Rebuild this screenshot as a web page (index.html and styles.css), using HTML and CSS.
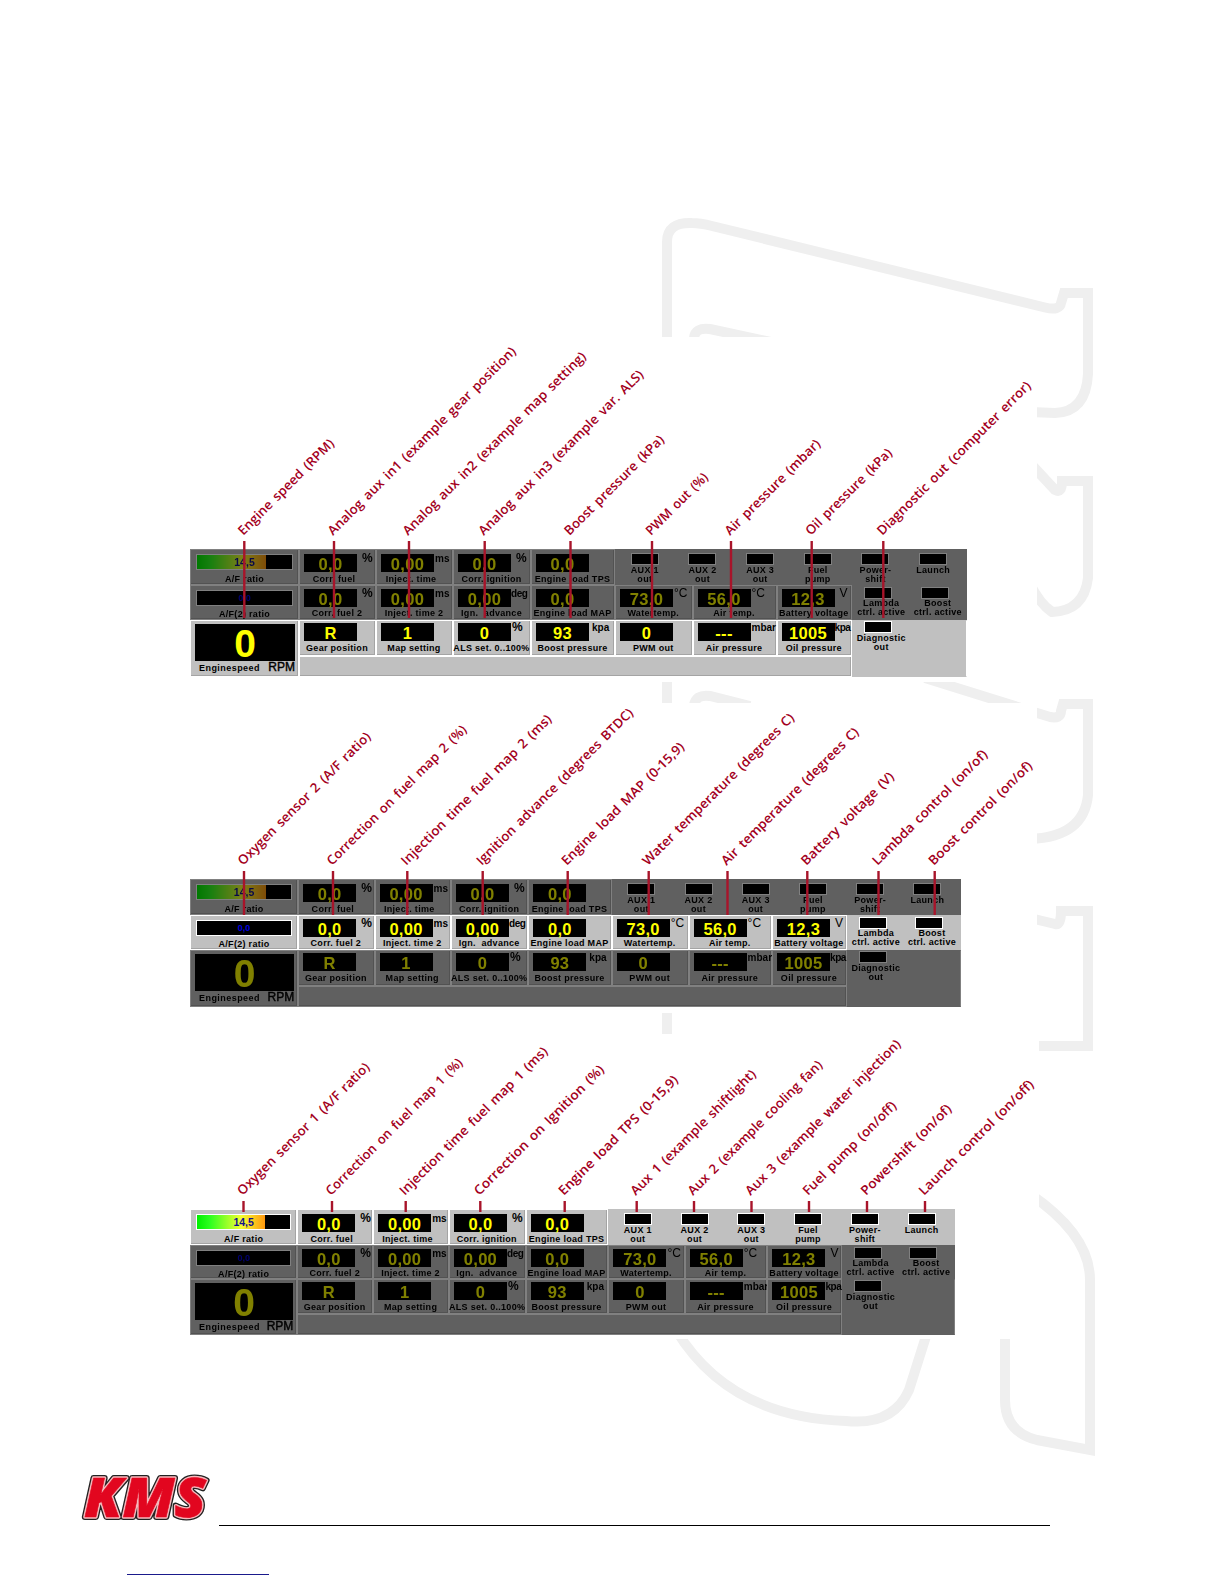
FILE: index.html
```
<!DOCTYPE html>
<html lang="en">
<head>
    <meta charset="UTF-8">
    <meta name="viewport" content="width=device-width, initial-scale=1.0">
    <title>KMS display overview</title>
    <link rel="stylesheet" href="styles.css">
</head>
<body>
    <svg class="watermark" viewBox="0 0 1224 1584">
        <path d="M667 345V242Q667 222 692 223Q700 223 712 226L1045 307.500Q1060 311 1061 303L1064 293H1088V374Q1086 412 1055 413L1030 412"/>
        <path d="M694 345V338Q695 327 710 329L775 343"/>
        <path d="M1030 463L1055 490Q1062 494 1062 481H1088V578Q1084 611 1052 612Q1040 604 1030 584"/>
        <path d="M667 675V710M694 712V706Q695 694 710 696L750 706M925 678L1050 717Q1061 719 1061 711L1063 704H1088V795Q1084 837 1030 839"/>
        <path d="M667 1005V1040M1030 918L1055 924Q1061 926 1061 911H1088V1046H1030"/>
        <path d="M1030 1194Q1090 1235 1090 1280V1450L1037 1440Q1005 1432 1005 1400V1330"/>
        <path d="M676 1330C705 1378 755 1418 846 1421Q893 1426 909 1390L928 1330"/>
    </svg>

    <main>
        <section class="figure figure-1"><div class="panel" id="panel-1"></div></section>
        <section class="figure figure-2"><div class="panel" id="panel-2"></div></section>
        <section class="figure figure-3"><div class="panel" id="panel-3"></div></section>
    </main>

    <footer>
        <svg class="logo" viewBox="0 -16 134 82">
            <g class="logo-text">
                <text class="logo-edge" x="5" y="46" textLength="122" lengthAdjust="spacingAndGlyphs">KMS</text>
                <text class="logo-rim" x="5" y="46" textLength="122" lengthAdjust="spacingAndGlyphs">KMS</text>
                <text class="logo-fill" x="5" y="46" textLength="122" lengthAdjust="spacingAndGlyphs">KMS</text>
            </g>
        </svg>
        <div class="rule"></div>
        <div class="link-line"></div>
    </footer>

    <script src="script.js"></script>
</body>
</html>
```
FILE: styles.css
```
* {
    box-sizing: border-box;
}

body {
    margin: 0;
    height: 1584px;
    overflow: hidden;
    background-color: #fff;
    font-family: "Liberation Sans", Arial, sans-serif;
}

.watermark {
    position: absolute;
    left: 0;
    top: 0;
    width: 1224px;
    height: 1584px;
    fill: none;
    stroke: #efefef;
    stroke-width: 10;
}

main {
    position: relative;
    display: flex;
    flex-direction: column;
    gap: 21px;
    padding: 337px 0 0 188px;
}

.figure {
    position: relative;
    width: 849px;
    padding-left: 2px;
    background-color: #fff;
}

.figure-1 {
    height: 345px;
    padding-top: 212px;
}

.figure-2 {
    height: 310px;
    padding-top: 176px;
}

.figure-3 {
    width: 851px;
    height: 305px;
    padding-top: 175px;
}

/* instrument panel */
.panel {
    display: grid;
    grid-template-columns: 109fr 77fr 77fr 78fr 84fr 77.5fr 84fr 75.5fr 115fr;
    grid-template-rows: 36fr 34.5fr 36fr 21fr;
    background-color: #606060;
    color: #000;
    font-size: 9px;
    font-weight: bold;
}

.figure-1 .panel {
    width: 777px;
    height: 128px;
}

.figure-2 .panel {
    width: 771px;
    height: 128px;
}

.figure-3 .panel {
    width: 765px;
    height: 126px;
}

.cell {
    position: relative;
    min-width: 0;
    min-height: 0;
    background-color: #c0c0c0;
    border: 1px solid #fff;
    box-shadow: inset -1px -1px 0 #a4a4a4;
}

.dim {
    filter: brightness(0.5);
}

.meter {
    display: flex;
    flex-direction: column;
    padding: 2px 0 0 4px;
}

.meter.row-1 {
    padding-top: 4px;
}

.meter.row-2 {
    padding-top: 3px;
}

.reading {
    display: flex;
    height: 18px;
}

.value {
    flex: none;
    width: 53px;
    background-color: #000;
    color: #ff0;
    font-size: 16.5px;
    line-height: 20px;
    letter-spacing: 0.3px;
    text-align: center;
}

.unit {
    font-size: 10px;
    line-height: 9px;
}

.near {
    margin-left: 1px;
}

.mid {
    margin-left: 3px;
}

.far {
    margin-left: 5px;
}

.tight {
    letter-spacing: -0.4px;
}

.percent {
    font-size: 12px;
}

.plain {
    font-size: 12px;
    font-weight: normal;
}

.label {
    margin: 2px 0 0 -5px;
    line-height: 10px;
    letter-spacing: 0.3px;
    text-align: center;
    white-space: nowrap;
}

.row-2 .label {
    margin-top: 1px;
}

.label.short {
    padding-right: 6px;
}

.ratio {
    padding: 4px 5px 0 5px;
}

.bar {
    position: relative;
    height: 16px;
    background-color: #000;
    border: 1px solid #fff;
}

.fill {
    height: 100%;
    background: linear-gradient(to right, #00f000, #30ff20 20%, #f4ff30 65%, #ff9810);
}

.bar-value {
    position: absolute;
    inset: 0;
    color: #101090;
    font-size: 10.5px;
    line-height: 15px;
    text-align: center;
}

.empty .bar-value {
    color: #0000e0;
    font-size: 9px;
}

.ratio .label {
    margin: 4px 0 0;
}

.ratio.empty .label {
    margin-top: 3px;
}

.speed {
    grid-row: 3 / 5;
    grid-column: 1;
    padding: 3px 3px 0 4px;
}

.speed-value {
    height: 37px;
    background-color: #000;
    color: #ff0;
    font-size: 39px;
    line-height: 39px;
    text-align: center;
}

.speed-labels {
    display: flex;
    justify-content: space-between;
    align-items: baseline;
    padding-left: 4px;
    line-height: 13px;
    letter-spacing: 0.45px;
}

.rpm {
    font-size: 12px;
    font-weight: normal;
    letter-spacing: 0;
    -webkit-text-stroke: 0.4px #000;
}

.lights {
    display: grid;
    border-color: #c0c0c0;
    box-shadow: none;
}

.lights-top {
    grid-row: 1;
    grid-column: 6 / 10;
    grid-template-columns: repeat(6, 1fr);
    padding: 3px 4px 0 0;
}

.lights-side {
    grid-row: 2;
    grid-column: 9;
    grid-template-columns: repeat(2, 1fr);
    padding-top: 1px;
}

.lights-bottom {
    grid-row: 3 / 5;
    grid-column: 9;
    grid-template-columns: repeat(2, 1fr);
    border-right-color: #fff;
}

.light {
    display: flex;
    flex-direction: column;
    align-items: center;
    line-height: 9.3px;
    letter-spacing: 0.3px;
    text-align: center;
    white-space: nowrap;
}

.light::before {
    content: "";
    flex: none;
    width: 26px;
    height: 10px;
    margin-right: 6px;
    background-color: #000;
    border: 1px solid #fff;
}

.lights-top .light::before {
    margin-right: 0;
    margin-bottom: 1px;
}

.lights-bottom .light::before {
    margin-bottom: 1px;
}

.message {
    grid-row: 4;
    grid-column: 2 / 9;
}

/* red callouts drawn over the panel */
.callouts {
    position: absolute;
    left: 0;
    top: 0;
    width: 100%;
    height: 100%;
    overflow: visible;
    font-family: "Open Sans", "Noto Sans", sans-serif;
    font-size: 13px;
    font-weight: 600;
    word-spacing: 2px;
    fill: #a3001d;
    stroke: #a8142a;
}

.callouts text {
    stroke: none;
}

.callouts line {
    stroke-width: 2.4;
}

footer {
    position: relative;
    padding-left: 79px;
    margin-top: 116px;
}

.logo {
    display: block;
    width: 134px;
    height: 82px;
    margin-bottom: -12px;
}

.logo-text {
    font-family: "Open Sans", "Liberation Sans", sans-serif;
    font-size: 55px;
    font-weight: 800;
    font-style: italic;
    stroke-linejoin: round;
}

.logo-edge {
    stroke: #222;
    stroke-width: 6;
}

.logo-rim {
    fill: #f6b8bc;
    stroke: #f6b8bc;
    stroke-width: 3.4;
}

.logo-fill {
    fill: #e2061f;
    stroke: #e2061f;
    stroke-width: 0.6;
}

.rule {
    width: 831px;
    height: 1px;
    margin-left: 140px;
    background-color: #000;
}

.link-line {
    width: 142px;
    height: 1px;
    margin: 48px 0 0 48px;
    background-color: #1a1a8c;
}
```
FILE: script.js
```
// value, label, unit, unit classes, label class
const rows = [
    [
        ['0,0', 'Corr. fuel', '%', 'far percent', 'short'],
        ['0,00', 'Inject. time', 'ms', 'near', 'short'],
        ['0,0', 'Corr. ignition', '%', 'far percent', ''],
        ['0,0', 'Engine load TPS', '', '', '']
    ],
    [
        ['0,0', 'Corr. fuel 2', '%', 'far percent', ''],
        ['0,00', 'Inject. time 2', 'ms', 'near', ''],
        ['0,00', 'Ign. &nbsp;advance', 'deg', 'tight', ''],
        ['0,0', 'Engine load MAP', '', '', ''],
        ['73,0', 'Watertemp.', '°C', 'near plain', ''],
        ['56,0', 'Air temp.', '°C', 'near plain', ''],
        ['12,3', 'Battery voltage', 'V', 'far plain', '']
    ],
    [
        ['R', 'Gear position', '', '', ''],
        ['1', 'Map setting', '', '', ''],
        ['0', 'ALS set. 0..100%', '%', 'near percent', ''],
        ['93', 'Boost pressure', 'kpa', 'mid', ''],
        ['0', 'PWM out', '', '', ''],
        ['---', 'Air pressure', 'mbar', 'near', ''],
        ['1005', 'Oil pressure', 'kpa', 'tight', '']
    ]
];

// lit: highlighted row, view: callout area, y: text baseline, line: top and bottom
// labels: x of the line, right end of the text, text
const figures = [
    {
        id: 'panel-1', lit: 3, view: '188 337 849 345', y: 536, line: [541, 618],
        labels: [
            [244.3, 336, 'Engine speed (RPM)'],
            [334, 517.7, 'Analog aux in1 (example gear position)'],
            [409, 587.7, 'Analog aux in2 (example map setting)'],
            [484.7, 645.3, 'Analog aux in3 (example var. ALS)'],
            [570.5, 666, 'Boost pressure (kPa)'],
            [652, 710, 'PWM out (%)'],
            [731, 822.3, 'Air pressure (mbar)'],
            [811.7, 894, 'Oil pressure (kPa)'],
            [883.3, 1032.7, 'Diagnostic out (computer error)']
        ]
    },
    {
        id: 'panel-2', lit: 2, view: '188 703 849 310', y: 866, line: [871, 915],
        labels: [
            [244, 372.5, 'Oxygen sensor 2 (A/F ratio)'],
            [333, 468.5, 'Correction on fuel map 2 (%)'],
            [407.3, 553.5, 'Injection time fuel map 2 (ms)'],
            [482.7, 635, 'Ignition advance (degrees BTDC)'],
            [567.7, 686, 'Engine load MAP (0-15,9)'],
            [648.7, 796, 'Water temperature (degrees C)'],
            [727.5, 860.7, 'Air temperature (degrees C)'],
            [807.3, 896, 'Battery voltage (V)'],
            [878.5, 989.3, 'Lambda control (on/of)'],
            [934.7, 1034, 'Boost control (on/of)']
        ]
    },
    {
        id: 'panel-3', lit: 1, view: '188 1034 851 305', y: 1196, line: [1201, 1212],
        labels: [
            [243.5, 371.5, 'Oxygen sensor 1 (A/F ratio)'],
            [332, 464.5, 'Correction on fuel map 1 (%)'],
            [405.7, 549.5, 'Injection time fuel map 1 (ms)'],
            [480.3, 606, 'Correction on Ignition (%)'],
            [564.7, 680, 'Engine load TPS (0-15,9)'],
            [636.7, 757.7, 'Aux 1 (example shiftlight)'],
            [694, 824.3, 'Aux 2 (example cooling fan)'],
            [751.5, 902.7, 'Aux 3 (example water injection)'],
            [809, 898.3, 'Fuel pump (on/off)'],
            [867, 953.3, 'Powershift (on/of)'],
            [925, 1035.7, 'Launch control (on/off)']
        ]
    }
];

function meter(item, row, column, dim) {
    return `<div class="cell meter row-${row} ${dim}" style="grid-row:${row};grid-column:${column}">
        <div class="reading"><div class="value">${item[0]}</div><span class="unit ${item[3]}">${item[2]}</span></div>
        <div class="label ${item[4]}">${item[1]}</div>
    </div>`;
}

function ratio(row, label, value, percent, dim) {
    return `<div class="cell ratio ${percent ? '' : 'empty'} ${dim}" style="grid-row:${row};grid-column:1">
        <div class="bar"><div class="fill" style="width:${percent}%"></div><span class="bar-value">${value}</span></div>
        <div class="label">${label}</div>
    </div>`;
}

function lights(name, labels, dim) {
    return `<div class="cell lights ${name} ${dim}">` +
        labels.map(label => `<div class="light"><span>${label}</span></div>`).join('') + '</div>';
}

function drawPanel(figure) {
    const dim = row => row === figure.lit ? '' : 'dim';
    let html = ratio(1, 'A/F ratio', '14,5', 73, dim(1)) + ratio(2, 'A/F(2) ratio', '0,0', 0, dim(2));

    rows.forEach((items, r) => {
        items.forEach((item, c) => {
            html += meter(item, r + 1, c + 2, dim(r + 1));
        });
    });

    html += `<div class="cell speed ${dim(3)}">
        <div class="speed-value">0</div>
        <div class="speed-labels"><span>Enginespeed</span><span class="rpm">RPM</span></div>
    </div>`;
    html += lights('lights-top', ['AUX 1<br>out', 'AUX 2<br>out', 'AUX 3<br>out', 'Fuel<br>pump', 'Power-<br>shift', 'Launch'], dim(1));
    html += lights('lights-side', ['Lambda<br>ctrl. active', 'Boost<br>ctrl. active'], dim(2));
    html += lights('lights-bottom', ['Diagnostic<br>out'], dim(3));
    html += `<div class="cell message ${dim(3)}"></div>`;
    document.getElementById(figure.id).innerHTML = html;
}

function drawCallouts(figure) {
    let svg = `<svg class="callouts" viewBox="${figure.view}">`;
    figure.labels.forEach(([x, right, text]) => {
        const length = (right - x + 1) * Math.SQRT2 - 1.5;
        svg += `<line x1="${x}" x2="${x}" y1="${figure.line[0]}" y2="${figure.line[1]}"/>`;
        svg += `<text transform="translate(${x - 1} ${figure.y}) rotate(-45)" textLength="${length}" lengthAdjust="spacingAndGlyphs">${text}</text>`;
    });
    svg += '</svg>';
    document.getElementById(figure.id).insertAdjacentHTML('afterend', svg);
}

figures.forEach(figure => {
    drawPanel(figure);
    drawCallouts(figure);
});
```
